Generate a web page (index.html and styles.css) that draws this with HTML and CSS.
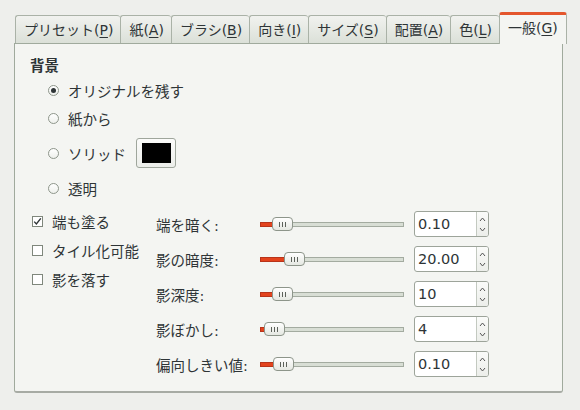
FILE: index.html
```html
<!DOCTYPE html>
<html lang="ja">
<head>
<meta charset="utf-8">
<link rel="stylesheet" href="styles.css">
</head>
<body>
<div class="notebook">
  <div class="tabs">
    <div class="tab">プリセット(<u>P</u>)</div>
    <div class="tab">紙(<u>A</u>)</div>
    <div class="tab">ブラシ(<u>B</u>)</div>
    <div class="tab">向き(<u>I</u>)</div>
    <div class="tab">サイズ(<u>S</u>)</div>
    <div class="tab">配置(<u>A</u>)</div>
    <div class="tab">色(<u>L</u>)</div>
    <div class="tab active">一般(<u>G</u>)</div>
  </div>
  <div class="page">
    <div class="heading">背景</div>
    <div class="radios">
      <div class="radio-row"><span class="radio checked"></span><span>オリジナルを残す</span></div>
      <div class="radio-row"><span class="radio"></span><span>紙から</span></div>
      <div class="radio-row tall"><span class="radio"></span><span>ソリッド</span><span class="color-btn"><span class="swatch"></span></span></div>
      <div class="radio-row"><span class="radio"></span><span>透明</span></div>
    </div>
    <div class="lower">
      <div class="checks">
        <div class="check-row"><span class="check on"><svg viewBox="0 0 11 11" width="11" height="11"><path d="M2.2 5.6 L4.4 8 L8.8 2.4" fill="none" stroke="#2e3436" stroke-width="1.4"/></svg></span><span>端も塗る</span></div>
        <div class="check-row"><span class="check"></span><span>タイル化可能</span></div>
        <div class="check-row"><span class="check"></span><span>影を落す</span></div>
      </div>
      <div class="sliders">
        <div class="lbl">端を暗く:</div>
        <div class="slider"><span class="fill" style="width:12px"></span><span class="thumb"><i></i><i></i><i></i></span><span class="rest"></span></div>
        <div class="spin"><span class="val">0.10</span><span class="btns"><svg viewBox="0 0 11 24" width="11" height="24"><path d="M3 9 L5.5 6 L8 9" fill="none" stroke="#555" stroke-width="1"/><path d="M3 16 L5.5 19 L8 16" fill="none" stroke="#555" stroke-width="1"/></svg></span></div>

        <div class="lbl">影の暗度:</div>
        <div class="slider"><span class="fill" style="width:24px"></span><span class="thumb"><i></i><i></i><i></i></span><span class="rest"></span></div>
        <div class="spin"><span class="val">20.00</span><span class="btns"><svg viewBox="0 0 11 24" width="11" height="24"><path d="M3 9 L5.5 6 L8 9" fill="none" stroke="#555" stroke-width="1"/><path d="M3 16 L5.5 19 L8 16" fill="none" stroke="#555" stroke-width="1"/></svg></span></div>

        <div class="lbl">影深度:</div>
        <div class="slider"><span class="fill" style="width:12px"></span><span class="thumb"><i></i><i></i><i></i></span><span class="rest"></span></div>
        <div class="spin"><span class="val">10</span><span class="btns"><svg viewBox="0 0 11 24" width="11" height="24"><path d="M3 9 L5.5 6 L8 9" fill="none" stroke="#555" stroke-width="1"/><path d="M3 16 L5.5 19 L8 16" fill="none" stroke="#555" stroke-width="1"/></svg></span></div>

        <div class="lbl">影ぼかし:</div>
        <div class="slider"><span class="fill" style="width:4px"></span><span class="thumb"><i></i><i></i><i></i></span><span class="rest"></span></div>
        <div class="spin"><span class="val">4</span><span class="btns"><svg viewBox="0 0 11 24" width="11" height="24"><path d="M3 9 L5.5 6 L8 9" fill="none" stroke="#555" stroke-width="1"/><path d="M3 16 L5.5 19 L8 16" fill="none" stroke="#555" stroke-width="1"/></svg></span></div>

        <div class="lbl">偏向しきい値:</div>
        <div class="slider"><span class="fill" style="width:13px"></span><span class="thumb"><i></i><i></i><i></i></span><span class="rest"></span></div>
        <div class="spin"><span class="val">0.10</span><span class="btns"><svg viewBox="0 0 11 24" width="11" height="24"><path d="M3 9 L5.5 6 L8 9" fill="none" stroke="#555" stroke-width="1"/><path d="M3 16 L5.5 19 L8 16" fill="none" stroke="#555" stroke-width="1"/></svg></span></div>
      </div>
    </div>
  </div>
</div>
</body>
</html>
```
FILE: styles.css
```css
body {
  margin: 0;
  background: #eeefec;
  font-family: "DejaVu Sans", "Noto Sans CJK JP", sans-serif;
  font-size: 14.5px;
  color: #2e3436;
}

.notebook {
  margin: 12px 0 0 14px;
  width: 549px;
}

.tabs {
  display: flex;
  align-items: flex-end;
  height: 31px;
  padding-left: 1px;
  font-size: 14px;
}

.tab {
  box-sizing: border-box;
  flex: none;
  height: 28px;
  line-height: 29px;
  padding: 0 7px 0 8px;
  border: 1px solid #aab2a7;
  border-bottom: none;
  border-right: none;
  border-radius: 3px 3px 0 0;
  background: linear-gradient(#f1f2ef, #dbe0d8);
  white-space: nowrap;
}

.tab u {
  text-decoration-thickness: 1px;
  text-underline-offset: 2px;
}

.tab.active {
  flex: 1 0 auto;
  text-align: center;
  height: 32px;
  line-height: 27px;
  margin-bottom: -1px;
  position: relative;
  z-index: 1;
  border-top: 3px solid #e4562d;
  border-right: 1px solid #aab2a7;
  background: #f4f5f2;
  padding: 0 8px;
}

.page {
  box-sizing: border-box;
  height: 350px;
  border: 1px solid #a0aa9d;
  border-bottom: 2px solid #a7aba4;
  border-radius: 0 0 3px 3px;
  background: #f4f5f2;
  padding: 12px 0 0 15px;
}

.heading {
  font-weight: bold;
  line-height: 20px;
  height: 20px;
}

.radios {
  padding-left: 18px;
}

.radio-row {
  display: flex;
  align-items: center;
  height: 28px;
  gap: 9px;
}

.radio-row.tall {
  height: 42px;
}

.radio {
  box-sizing: border-box;
  width: 11px;
  height: 11px;
  border: 1px solid #8e968b;
  border-radius: 50%;
  background: linear-gradient(#ffffff, #eef0ec);
  display: flex;
  align-items: center;
  justify-content: center;
}

.radio.checked::after {
  content: "";
  width: 5px;
  height: 5px;
  border-radius: 50%;
  background: #2e3436;
}

.color-btn {
  box-sizing: border-box;
  width: 40px;
  height: 30px;
  margin-left: 1px;
  border: 1px solid #9fa69c;
  border-radius: 3px;
  background: linear-gradient(#fbfbfa, #eceeea);
  padding: 4px 4px 4px 5px;
  display: flex;
}

.swatch {
  width: 29px;
  height: 20px;
  background: #000;
}

.lower {
  display: flex;
}

.checks {
  width: 126px;
  padding: 5px 0 0 2px;
  box-sizing: border-box;
}

.check-row {
  display: flex;
  align-items: center;
  height: 29px;
  gap: 9px;
}

.check {
  box-sizing: border-box;
  width: 11px;
  height: 11px;
  border: 1px solid #7f877c;
  background: #fff;
  display: flex;
  align-items: center;
  justify-content: center;
}

.check svg {
  display: block;
  flex: none;
}

.sliders {
  padding-top: 9px;
  display: grid;
  grid-template-columns: 104px 154px 75px;
  grid-auto-rows: 26px;
  row-gap: 9px;
  align-items: center;
}

.lbl {
  white-space: nowrap;
}

.slider {
  display: flex;
  align-items: center;
  width: 144px;
  height: 26px;
}

.fill {
  box-sizing: border-box;
  height: 5px;
  background: #e3431d;
  border: 1px solid #b8341a;
  border-right: none;
  flex: none;
}

.thumb {
  box-sizing: border-box;
  flex: none;
  width: 21px;
  height: 14px;
  border: 1px solid #8d958a;
  border-radius: 4px;
  background: linear-gradient(#ffffff, #e5e8e2);
  display: flex;
  align-items: center;
  justify-content: center;
  gap: 2px;
}

.thumb i {
  width: 1px;
  height: 5px;
  background: #5d625b;
}

.rest {
  box-sizing: border-box;
  flex: 1;
  height: 5px;
  background: #d8ded5;
  border: 1px solid #a3aba0;
  border-left: none;
}

.spin {
  box-sizing: border-box;
  width: 75px;
  height: 26px;
  border: 1px solid #9da49a;
  border-radius: 3px;
  background: #fff;
  display: flex;
  overflow: hidden;
}

.val {
  flex: 1;
  padding-left: 3px;
  line-height: 24px;
}

.btns {
  width: 11px;
  border-left: 1px solid #c3c9c0;
  background: linear-gradient(#fafbf9, #eceeea);
  display: flex;
}

.btns svg {
  display: block;
}
```
